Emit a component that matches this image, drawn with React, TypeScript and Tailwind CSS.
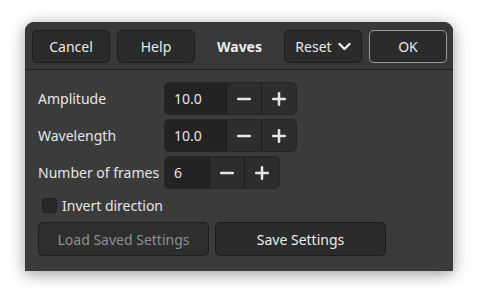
import { Minus, Plus } from 'lucide-react';

const FONT = { fontFamily: '"Noto Sans", "Open Sans", sans-serif' };

const ROWS = [
  { label: 'Amplitude', value: '10.0', entry: 'w-[61px]' },
  { label: 'Wavelength', value: '10.0', entry: 'w-[61px]' },
  { label: 'Number of frames', value: '6', entry: 'w-[44px]' },
];

function HeaderButton({ children, accent = false }: { children: React.ReactNode; accent?: boolean }) {
  return (
    <button
      className={`h-[33px] w-[78px] rounded-[5px] bg-[#2b2b2b] text-[14px] text-[#e8e8e8] flex items-center justify-center gap-[6px] border ${
        accent ? 'border-[#9a9a9a]' : 'border-[#1c1c1c]'
      }`}
    >
      {children}
    </button>
  );
}

export default function App() {
  return (
    <div className="w-[479px] h-[300px] bg-white pt-[22px] pl-[25px]" style={FONT}>
      <div className="w-[428px] h-[249px] rounded-t-[9px] bg-[#3b3b3b] shadow-[0_3px_16px_rgba(0,0,0,0.4)] flex flex-col">
        {/* Header bar */}
        <div className="h-[48px] rounded-t-[9px] bg-[#383838] border-b border-[#1f1f1f] flex items-center pl-[7px] pr-[6px] pt-[1px]">
          <div className="flex gap-[7px]">
            <HeaderButton>Cancel</HeaderButton>
            <HeaderButton>Help</HeaderButton>
          </div>
          <div className="flex-1 text-center text-[14px] font-bold text-[#ececec]">Waves</div>
          <div className="flex gap-[7px]">
            <HeaderButton>
              Reset
              <svg width="13" height="9" viewBox="0 0 13 9" className="mt-[1px]">
                <polyline points="1.5,2 6.5,7 11.5,2" fill="none" stroke="currentColor" strokeWidth="2.4" strokeLinecap="round" strokeLinejoin="round" />
              </svg>
            </HeaderButton>
            <HeaderButton accent>OK</HeaderButton>
          </div>
        </div>

        {/* Body */}
        <div className="flex-1 pl-[13px] pt-[12px] flex flex-col text-[14px] text-[#e6e6e6]">
          <div className="flex flex-col gap-[4px]">
            {ROWS.map((r) => (
              <div key={r.label} className="flex items-center h-[33px]">
                <div className="w-[126px]">{r.label}</div>
                <div className="flex h-[33px] rounded-[5px] border border-[#262626] overflow-hidden">
                  <div className={`${r.entry} bg-[#232323] pl-[9px] flex items-center`}>{r.value}</div>
                  <div className="w-[35px] bg-[#2d2d2d] border-l border-[#1b1b1b] flex items-center justify-center">
                    <Minus size={20} strokeWidth={3} />
                  </div>
                  <div className="w-[35px] bg-[#2d2d2d] border-l border-[#1b1b1b] flex items-center justify-center">
                    <Plus size={20} strokeWidth={3} />
                  </div>
                </div>
              </div>
            ))}
          </div>

          <div className="flex items-center mt-[8px] pl-[4px] h-[16px]">
            <div className="w-[15px] h-[15px] rounded-[3px] bg-[#282828] border border-[#222]" />
            <span className="ml-[5px]">Invert direction</span>
          </div>

          <div className="flex gap-[6px] mt-[9px]">
            <button className="w-[171px] h-[34px] rounded-[5px] bg-[#2e2e2e] border border-[#1f1f1f] text-[#8e8e8e]">
              Load Saved Settings
            </button>
            <button className="w-[171px] h-[34px] rounded-[5px] bg-[#2b2b2b] border border-[#1c1c1c] text-[#ececec]">
              Save Settings
            </button>
          </div>
        </div>
      </div>
    </div>
  );
}
